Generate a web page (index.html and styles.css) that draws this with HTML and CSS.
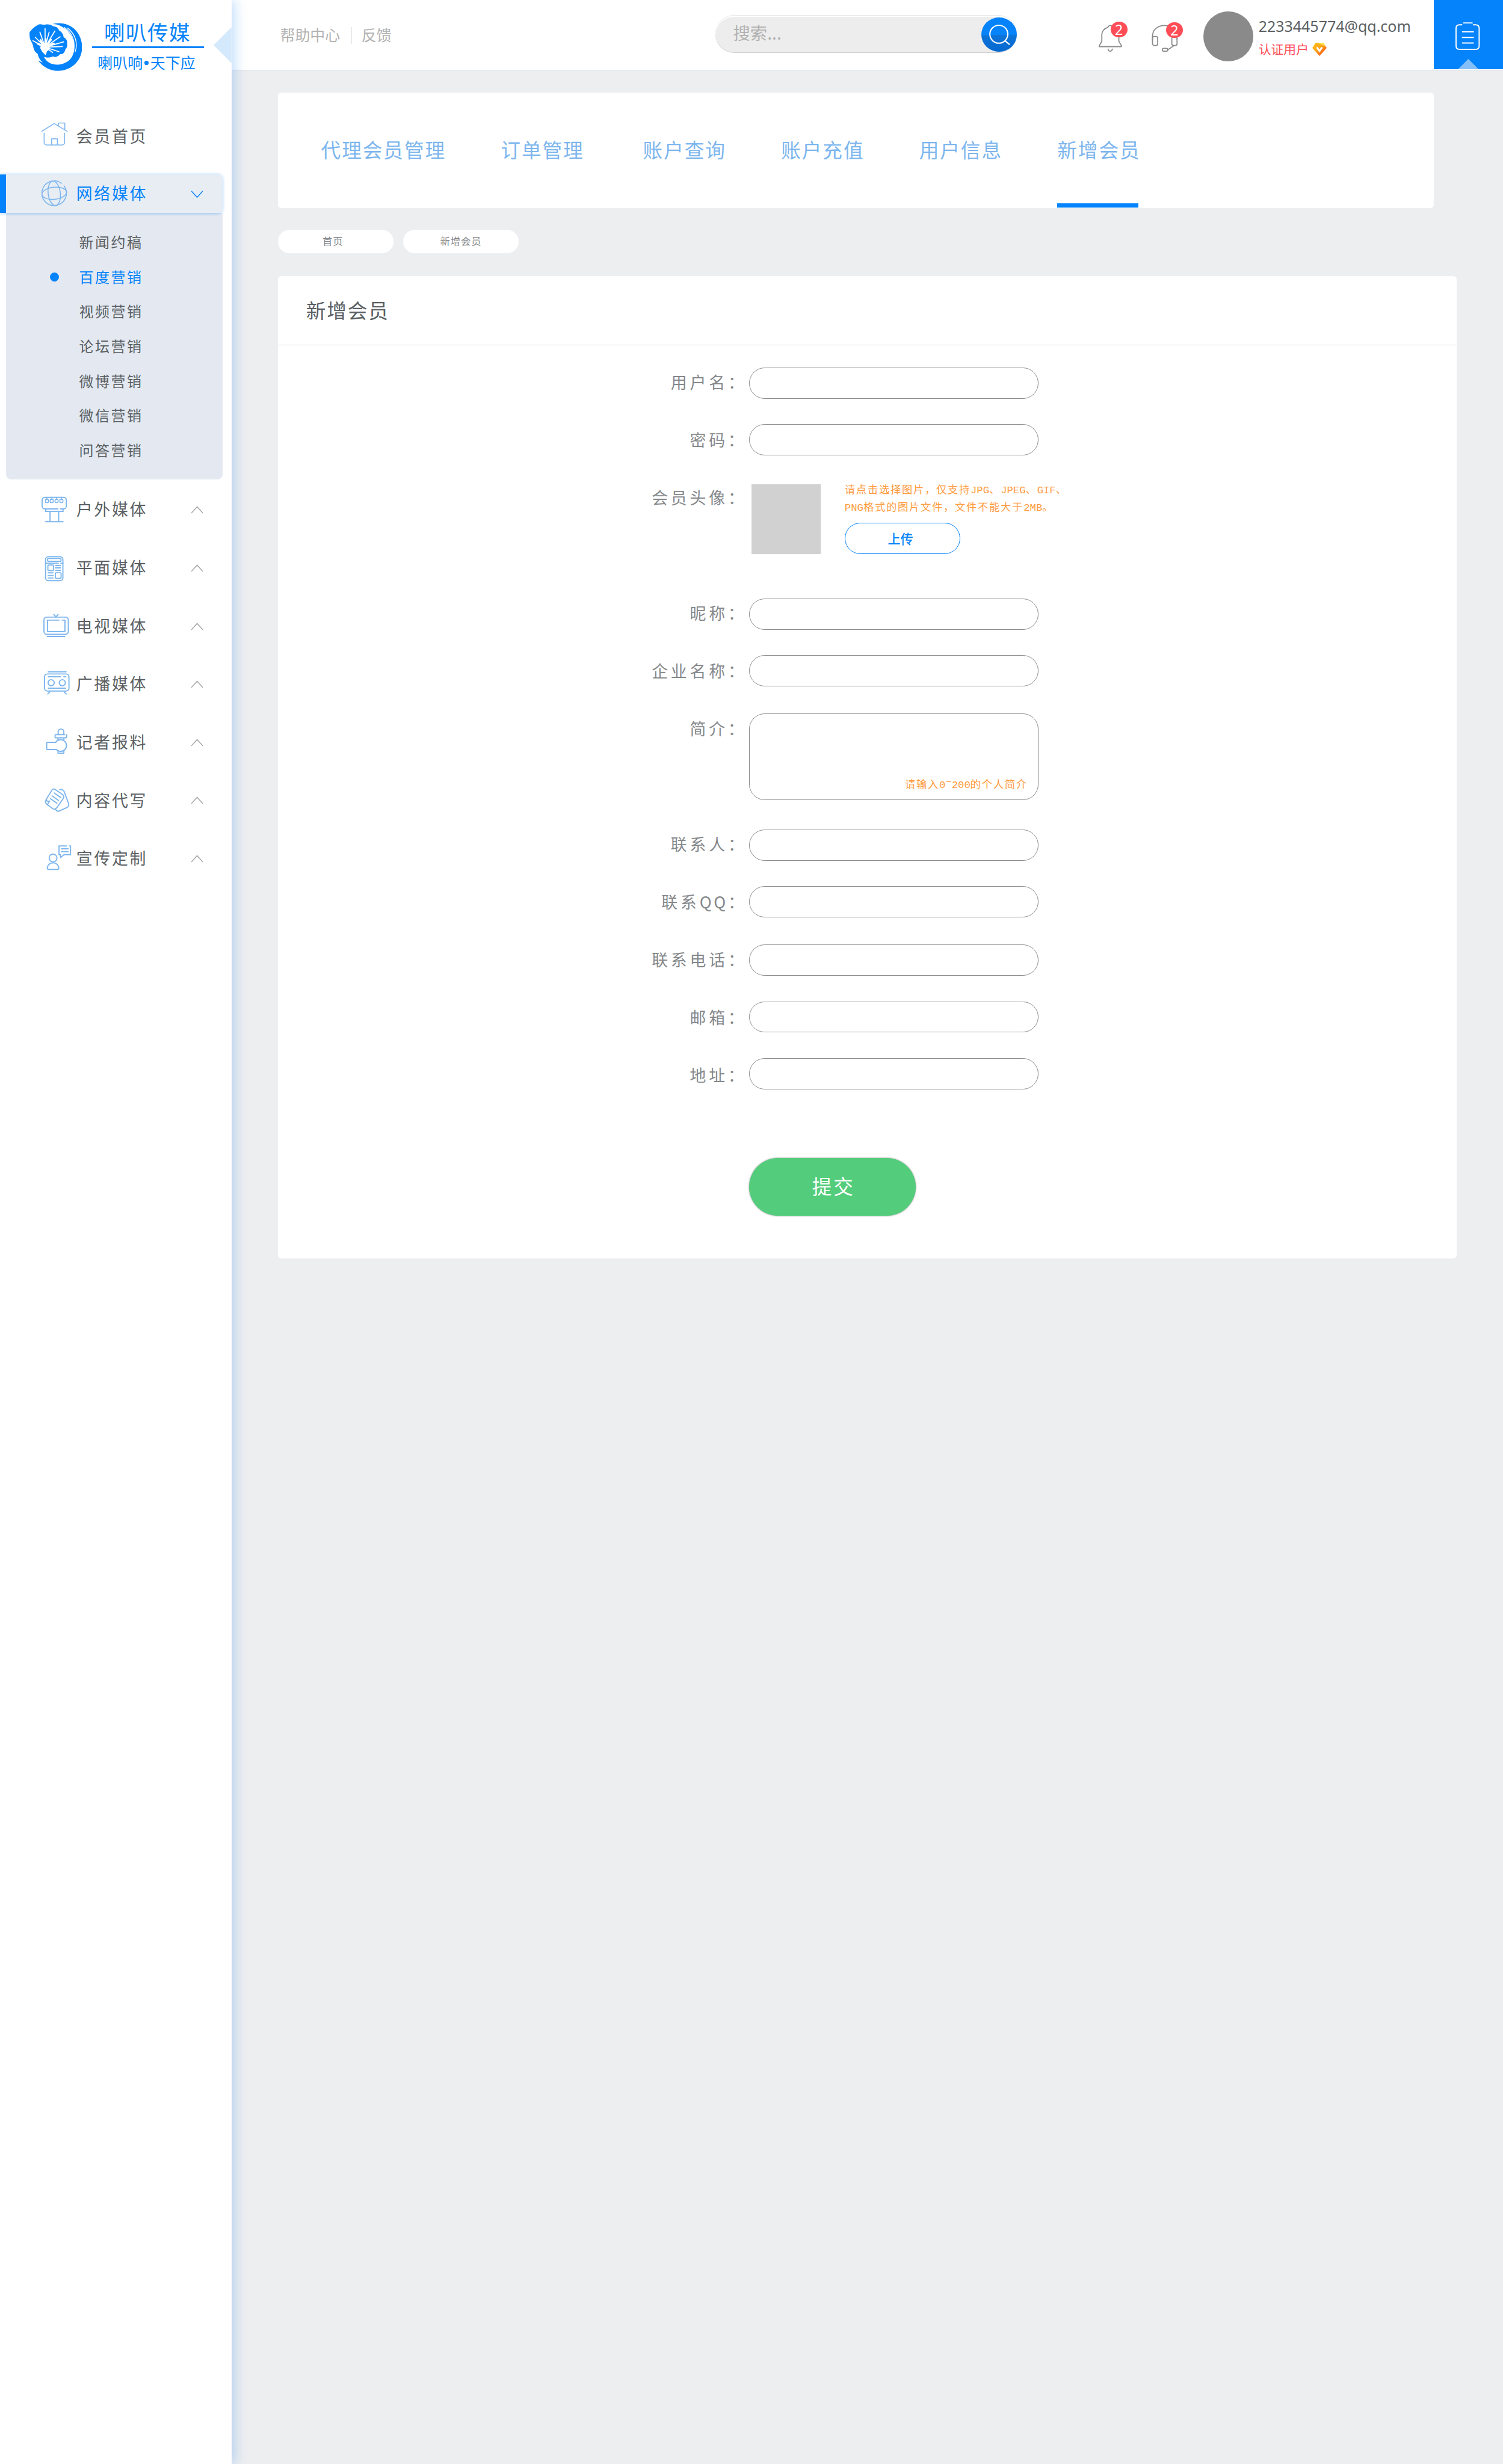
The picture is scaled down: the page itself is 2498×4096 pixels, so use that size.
FILE: index.html
```html
<!DOCTYPE html>
<html lang="zh-CN">
<head>
<meta charset="utf-8">
<title>新增会员</title>
<link rel="stylesheet" href="styles.css">
</head>
<body>
<svg class="defs" width="0" height="0">
  <symbol id="chev-up" viewBox="0 0 20 14"><path d="M0 12.5 10 1.5 20 12.5"/></symbol>
  <symbol id="chev-down" viewBox="0 0 20 14"><path d="M0 1.5 10 12.5 20 1.5"/></symbol>
</svg>
<div class="page">
  <aside class="sidebar">
    <div class="brand">
      <svg class="brand-mark" viewBox="0 0 91 83">
        <path fill="#0583fb" d="M40 2C68-5 91 15 91 42c0 24-19 41-42 41-14 0-26-7-34-18l8 4c-6-6-9-12-9-19l11 8c4 13 24 20 41 9C80 57 83 32 66 14 59 7 50 2 40 2z"/>
        <path fill="#0583fb" d="M0 17C4 10 10 6 15 3c5-2 8 1 12 0 6-1 10 0 14 3 6 0 9 4 10 7 6 3 8 8 8 12 5 2 7 7 6 11 1 5-1 8-3 10-1 6-5 9-9 8-3 5-9 6-12 4-5 2-10 3-14 1-7 0-11-4-15-7C6 47 7 38 4 34 1 29 0 26 0 17z"/>
        <g stroke="#fff" stroke-linecap="round" fill="none">
          <path stroke-width="1.800" d="M27 42 27 10M27 42 34 16M27 42 44 14M27 42 53 24M27 42 59 33M27 42 57 41M27 42 51 50M27 42 18 16M27 42 10 25M27 42 6 31M27 42 40 51"/>
          <path stroke-width="3.5" d="M27 42 28 28M27 42 37 29M27 42 42 36M27 42 19 30M27 42 14 36"/>
          <path stroke-width="1.4" d="M60 8C74 17 80 32 76 49M58 11C69 20 75 34 71 48M66 9C80 20 84 36 79 50"/>
        </g>
        <circle cx="27" cy="42" r="8" fill="#fff"/>
        <path fill="#fff" d="M18 42c2 6 5 10 10 14l3-9z"/>
      </svg>
      <div class="brand-text">
        <div class="brand-name">喇叭传媒</div>
        <div class="brand-slogan">喇叭响<i class="brand-dot"></i>天下应</div>
      </div>
      <span class="collapse"></span>
    </div>

    <a class="menu-item home">
      <svg class="menu-icon" viewBox="0 0 52 52"><path d="M.3 17 22 3.5 44.5 17M29.3 7V2.7h11V14M4.5 20v16.500a4 4 0 0 0 4 4H36a4 4 0 0 0 4-4V20M17.500 40.500V30h10v10.500" stroke-width="1.6"/></svg>
      <span>会员首页</span>
    </a>

    <a class="menu-item active">
      <svg class="menu-icon" viewBox="0 0 52 52"><g stroke-width="1.6"><path d="M34.500 8A21.300 21.300 0 1 0 39 12.500"/><ellipse cx="22" cy="25.300" rx="10.500" ry="21.300" transform="rotate(-7 22 25.300)"/><ellipse cx="22" cy="25.300" rx="21.300" ry="10.500" transform="rotate(-6 22 25.300)"/></g></svg>
      <span>网络媒体</span>
      <svg class="chevron"><use href="#chev-down"/></svg>
    </a>
    <div class="submenu">
      <a>新闻约稿</a>
      <a class="current">百度营销</a>
      <a>视频营销</a>
      <a>论坛营销</a>
      <a>微博营销</a>
      <a>微信营销</a>
      <a>问答营销</a>
    </div>

    <a class="menu-item">
      <svg class="menu-icon" viewBox="0 0 52 52"><path d="M28.500 25H6a5 5 0 0 1-5-5V10a5 5 0 0 1 5-5h32a5 5 0 0 1 5 5v10a5 5 0 0 1-5 5h-5M7 25.500v3.800h30.300v-3.800M14.700 29.500V47M29.700 29.500V47M7 47.200h30.300"/><g stroke-width="1.700"><path d="M9.300 5v3.500M17.700 5v3.500M26 5v3.500M34.300 5v3.500"/><rect x="6.700" y="8.500" width="5.300" height="5.600" rx="1.500"/><rect x="15" y="8.500" width="5.300" height="5.600" rx="1.500"/><rect x="23.400" y="8.500" width="5.300" height="5.600" rx="1.500"/><rect x="31.700" y="8.500" width="5.300" height="5.600" rx="1.500"/></g></svg>
      <span>户外媒体</span>
      <svg class="chevron"><use href="#chev-up"/></svg>
    </a>
    <a class="menu-item">
      <svg class="menu-icon" viewBox="0 0 52 52"><rect x="7" y="6.600" width="30" height="41.500" rx="5"/><rect x="10.500" y="9.700" width="23.300" height="5" rx="2"/><path d="M7 17.900h22M33.500 17.900H37M24.500 21.800h8.500M24.500 26h8.500M24.500 30.300h8.500M11.500 34.700h8.500M11.500 39.200h8.500M11.500 43.600h8.500"/><rect x="11" y="21" width="10" height="9.700" rx="1.500"/><rect x="23.900" y="34.500" width="10" height="9.700" rx="1.500"/></svg>
      <span>平面媒体</span>
      <svg class="chevron"><use href="#chev-up"/></svg>
    </a>
    <a class="menu-item">
      <svg class="menu-icon" viewBox="0 0 52 52"><rect x="4.200" y="11.300" width="42.200" height="29.800" rx="5"/><path d="M30.500 16.500H10.300v19.800h30.300V16.500h-5M21.300 6.800 25 10.800l3.700-4M10 44.800h30.300"/></svg>
      <span>电视媒体</span>
      <svg class="chevron"><use href="#chev-up"/></svg>
    </a>
    <a class="menu-item">
      <svg class="menu-icon" viewBox="0 0 52 52"><rect x="5.200" y="8.700" width="42.300" height="29.500" rx="5"/><path d="M11.800 4.900h30.700M11.800 13.500h21M38.500 13.500h3.600M11.800 33.300h30M14.300 39.800l-3.500 3.600M39.300 39.800l3.500 3.600"/><circle cx="16.700" cy="23.900" r="5.300"/><circle cx="36" cy="23.900" r="5.300"/></svg>
      <span>广播媒体</span>
      <svg class="chevron"><use href="#chev-up"/></svg>
    </a>
    <a class="menu-item">
      <svg class="menu-icon" viewBox="0 0 52 52"><path d="M29.500 12.500C28.500 10.500 28.500 9 28.700 8a5 5 0 0 1 10 0c.2 1 .2 2.500-.8 4.500M40 12.800H24.500a1 1 0 0 0-1 1v3.500a1 1 0 0 0 1 1H41a2.500 2.500 0 0 0 2.500-2.500v-3M28.500 18.500v4M38.700 18.500v4M24.500 26H10a1 1 0 0 0-1 1v10.500a1 1 0 0 0 1 1h15.500M28.500 41v3a.7.7 0 0 0 .7.700H38a.7.700 0 0 0 .7-.700v-3"/><path d="M24.500 26a10.200 10.200 0 1 1 1 12.500"/></svg>
      <span>记者报料</span>
      <svg class="chevron"><use href="#chev-up"/></svg>
    </a>
    <a class="menu-item">
      <svg class="menu-icon" viewBox="0 0 52 52"><path d="M23.500 7.500 36 16.200q4.500 3 1.500 7.300L26.300 39.500q-3 4-7 1.200L9.500 33.700q-4-3.500-1.700-8.200L17.500 9.500q2.500-4 6-2zM7.800 25.500q1.200 3.500 6.200 2.200L10 34M22 13.800l11 7.700M18.300 18.800l11 7.700M15.500 23.700l11 7.700M31.500 7.800q6-.8 8 4.200L47 32.500q1.200 4.500-3 6.500L31.500 44.700q-4.500 2-7.500-3"/></svg>
      <span>内容代写</span>
      <svg class="chevron"><use href="#chev-up"/></svg>
    </a>
    <a class="menu-item">
      <svg class="menu-icon" viewBox="0 0 52 52"><circle cx="20" cy="25.300" r="6.800"/><path d="M12 45h16q2 0 2-2.500C29.500 37.500 25.500 33.500 20 33.500S10.500 37.500 10 42.500Q10 45 12 45zM43.500 4.400H30.300v15.200H33v5l6-5h11.200V4.400H48.500M34.500 9.300H46M34.500 14.400H46"/></svg>
      <span>宣传定制</span>
      <svg class="chevron"><use href="#chev-up"/></svg>
    </a>
  </aside>

  <div class="main">
    <header class="topbar">
      <nav class="links"><a>帮助中心</a><i></i><a>反馈</a></nav>
      <div class="search">
        <span>搜索...</span>
        <button class="search-btn"><svg viewBox="0 0 62 60"><circle cx="30.300" cy="29" r="15.500"/><path d="M41 40.500l8 6.500"/></svg></button>
      </div>
      <div class="notice">
        <svg viewBox="0 0 44 48"><path d="M17 4.500Q18 1.500 21.500 1.500T26 4.500Q36 8 36 17V29l4.500 7.500q.5 1.500-1 1.500H3q-1.500 0-1-1.500L6.500 29V17Q7 8 17 4.500zM17 41.500q1 4.500 4 4.500t4-4.500"/></svg>
        <b class="badge">2</b>
      </div>
      <div class="notice headset">
        <svg viewBox="0 0 46 48"><path d="M1.500 26V20.500C1.500 9 10 1.500 22.500 1.500S44 9 44 20.500V26"/><rect x="1.500" y="20.500" width="9" height="15.500" rx="3"/><rect x="35" y="20.500" width="9" height="15.500" rx="3"/><path d="M38.500 36.500 28 43.500"/><rect x="18.500" y="41" width="9.500" height="5" rx="2.500"/></svg>
        <b class="badge">2</b>
      </div>
      <div class="avatar"></div>
      <div class="account">
        <div class="email">2233445774@qq.com</div>
        <div class="verified">认证用户
          <svg viewBox="0 0 25 23"><defs><linearGradient id="gem" x1="0" y1="0" x2="1" y2="1"><stop offset="0" stop-color="#ffc21a"/><stop offset=".45" stop-color="#ffa31a"/><stop offset="1" stop-color="#ee3a14"/></linearGradient></defs><path fill="url(#gem)" d="M6 0h13l6 9-12.500 14L0 9z"/><path fill="#ffe04a" d="M8 0h11l4 6-6-2z"/><path d="M8 8l4.500 6.500L17 8" fill="none" stroke="#fff" stroke-width="3"/></svg>
        </div>
      </div>
      <div class="tasks">
        <svg viewBox="0 0 42 48"><path d="M11 4.500H7q-6 0-6 6V41q0 6 6 6H35q6 0 6-6V10.500q0-6-6-6H31M14 1.200H29M12 16.500H31M12 26.300H31M12 36H31"/></svg>
        <span class="tasks-arrow"></span>
      </div>
    </header>

    <nav class="tabs">
      <a>代理会员管理</a>
      <a>订单管理</a>
      <a>账户查询</a>
      <a>账户充值</a>
      <a>用户信息</a>
      <a class="on">新增会员</a>
    </nav>

    <div class="crumbs"><a>首页</a><a>新增会员</a></div>

    <section class="panel">
      <h1>新增会员</h1>
      <form class="form">
        <div class="row"><label>用户名：</label><div class="field d24"></div></div>
        <div class="row"><label>密码：</label><div class="field d22"></div></div>
        <div class="row tall">
          <label>会员头像：</label>
          <div class="photo"></div>
          <div class="upload">
            <p>请点击选择图片，仅支持<em>JPG</em>、<em>JPEG</em>、<em>GIF</em>、</p>
            <p><em>PNG</em>格式的图片文件，文件不能大于<em>2MB</em>。</p>
            <button class="upload-btn">上传</button>
          </div>
        </div>
        <div class="row"><label>昵称：</label><div class="field d24"></div></div>
        <div class="row"><label>企业名称：</label><div class="field d22"></div></div>
        <div class="row tall"><label>简介：</label><div class="field area">请输入<em>0<i class="tilde">~</i>200</em>的个人简介</div></div>
        <div class="row"><label>联系人：</label><div class="field d24"></div></div>
        <div class="row"><label>联系<span class="latin">QQ</span>：</label><div class="field d22"></div></div>
        <div class="row"><label>联系电话：</label><div class="field d23"></div></div>
        <div class="row"><label>邮箱：</label><div class="field d21"></div></div>
        <div class="row"><label>地址：</label><div class="field d19"></div></div>
        <button class="submit">提交</button>
      </form>
    </section>
  </div>
</div>
</body>
</html>
```
FILE: styles.css
```css
* { box-sizing: border-box; }

body {
  margin: 0;
  background: #edeef0;
  font-family: "Noto Sans CJK SC", sans-serif;
  color: #5a5f63;
}

p, h1 { margin: 0; font-weight: 400; }
em, i { font-style: normal; }
button { border: 0; padding: 0; font: inherit; }
.defs { display: block; position: absolute; }

.page {
  zoom: 0.9606;
  display: flex;
  width: 100%;
  height: 4264px;
  overflow: hidden;
}

/* ---------- sidebar ---------- */
.sidebar {
  position: relative;
  z-index: 2;
  flex: none;
  width: 400.5px;
  background: #fff;
  box-shadow: 5px 0 20px rgba(5, 125, 240, .25);
}

.brand {
  position: relative;
  display: flex;
  height: 186px;
  padding: 40px 0 0 51px;
  color: #0583fb;
}
.brand-mark { width: 91px; height: 83px; }
.brand-text { width: 194px; margin-left: 17px; }
.brand-name {
  height: 43px;
  padding: 1px 0 0 21px;
  border-bottom: 4px solid #0583fb;
  font-size: 36px;
  line-height: 28px;
  letter-spacing: 1.5px;
  white-space: nowrap;
}
.brand-slogan {
  display: flex;
  align-items: center;
  padding-left: 10px;
  margin-top: 12px;
  font-size: 26px;
  line-height: 26px;
  white-space: nowrap;
}
.brand-dot { width: 7px; height: 7px; margin: 2px 3px 0 3px; border-radius: 50%; background: #0583fb; }
.collapse {
  position: absolute;
  right: 0;
  top: 47px;
  width: 31px;
  height: 62px;
  background: #d5e9fc;
  clip-path: polygon(100% 0, 100% 100%, 0 50%);
}

.menu-item {
  display: flex;
  align-items: center;
  height: 100.6px;
  padding: 0 49px 0 72px;
  font-size: 28px;
  letter-spacing: 2.8px;
  line-height: 40px;
}
.menu-item span { margin-top: -1px; }
.menu-icon {
  width: 52px;
  height: 52px;
  margin-right: 8px;
  fill: none;
  stroke: #7db6ee;
  stroke-width: 2;
  stroke-linecap: round;
  stroke-linejoin: round;
}
.chevron { width: 20px; height: 14px; margin: 2px 0 0 auto; fill: none; stroke: #a5a7a9; stroke-width: 1.5; }
.menu-item.home { height: 100px; margin-bottom: 16px; }
.menu-item.active {
  position: relative;
  width: 385px;
  height: 66.600px;
  padding-right: 34px;
  border-radius: 0 9px 9px 0;
  background: linear-gradient(90deg, #0583fb 10px, #e8edf4 10px);
  box-shadow: 0 1px 6px rgba(5, 131, 251, .4);
  color: #0583fb;
}
.menu-item.active span { margin-top: -2px; }
.menu-item.active .chevron { stroke: #0583fb; margin-top: 1px; }

.submenu {
  width: 375px;
  height: 461px;
  margin: 0 0 2px 10px;
  padding-top: 19.500px;
  border-radius: 0 0 9px 9px;
  background: #e4e9f1;
}
.submenu a {
  display: flex;
  align-items: center;
  height: 60px;
  padding-left: 127px;
  font-size: 25px;
  letter-spacing: 2.6px;
}
.submenu .current { color: #0583fb; padding-left: 76px; }
.submenu .current::before {
  content: "";
  width: 16px;
  height: 16px;
  margin: 3px 35px 0 0;
  border-radius: 50%;
  background: #0583fb;
}

/* ---------- top bar ---------- */
.main { flex: 1; min-width: 0; }

.topbar {
  display: flex;
  height: 122px;
  border-bottom: 2px solid #d9dee2;
  background: #fff;
}
.links {
  display: flex;
  align-items: center;
  width: 837px;
  padding: 0 0 3px 84px;
  font-size: 26px;
  color: #b2b2b2;
}
.links i { width: 2px; height: 29px; margin: 5px 17px 0 18px; background: #b2b2b2; }

.search {
  display: flex;
  align-items: center;
  justify-content: space-between;
  width: 522px;
  height: 66px;
  margin-top: 26px;
  padding-left: 31px;
  border-radius: 33px;
  background: #ededed;
  box-shadow: inset 0 1px 0 #e6e6e6, inset 0 3px 0 #fff, inset 0 -1px 0 #cfcfcf;
  font-size: 29.5px;
  line-height: 40px;
  color: #b2b2b2;
}
.search span { margin-top: -6px; }
.search-btn {
  width: 62px;
  height: 60px;
  margin-top: 2px;
  border-radius: 50%;
  background: linear-gradient(#0583fb 51%, #0e74d8 51%, #0468d0);
}
.search-btn svg { display: block; width: 62px; height: 60px; fill: none; stroke: #fff; stroke-width: 2.2; }

.notice { position: relative; width: 44px; height: 48px; margin: 43px 0 0 140px; }
.notice svg { display: block; height: 48px; fill: none; stroke: #8c8c8c; stroke-width: 1.9; }
.notice.headset { width: 46px; margin-left: 49px; }
.badge {
  position: absolute;
  left: 22px;
  top: -6px;
  width: 29px;
  height: 28px;
  border-radius: 50%;
  background: #ff4d57;
  color: #fff;
  font: 400 24px/28px "Noto Sans", sans-serif;
  text-align: center;
}
.headset .badge { left: 25px; top: -5px; }

.avatar { width: 86px; height: 86px; margin: 20px 0 0 44px; border-radius: 50%; background: #8a8a8a; }
.account { width: 312px; padding-left: 9px; }
.email { margin-top: 27px; font: 26px/36px "Noto Sans", sans-serif; }
.verified {
  display: flex;
  align-items: center;
  gap: 6px;
  margin-top: 6px;
  font-size: 21.700px;
  line-height: 32px;
  color: #ff4d57;
}
.verified svg { width: 25px; height: 23px; margin-top: 1px; }

.tasks { position: relative; flex: 1; height: 120px; background: #0583fb; }
.tasks svg { display: block; width: 42px; height: 48px; margin: 39px 0 0 38px; fill: none; stroke: #fff; stroke-width: 2; stroke-linecap: round; }
.tasks-arrow {
  position: absolute;
  left: 42px;
  bottom: 0;
  width: 36px;
  height: 18px;
  background: #84bff8;
  clip-path: polygon(50% 0, 100% 100%, 0 100%);
}

/* ---------- tabs and breadcrumbs ---------- */
.tabs {
  display: flex;
  gap: 95px;
  width: 2000px;
  height: 200px;
  margin: 38px 0 0 80px;
  padding-left: 75px;
  border-radius: 6px;
  background: #fff;
  font-size: 34px;
  line-height: 196px;
  letter-spacing: 2px;
  color: #7db6ee;
}
.tabs a { height: 199px; }
.tabs a:nth-child(2) { margin-right: 7px; }
.tabs .on { width: 140px; border-bottom: 8px solid #0583fb; white-space: nowrap; }

.crumbs { display: flex; gap: 17px; margin: 38px 0 0 80px; }
.crumbs a {
  width: 200px;
  height: 40px;
  padding-right: 9px;
  border-radius: 20px;
  background: #fff;
  font-size: 17px;
  line-height: 39px;
  letter-spacing: 1px;
  text-align: center;
  color: #85888b;
}
.crumbs a + a { padding-right: 0; }

/* ---------- form panel ---------- */
.panel {
  width: 2040px;
  height: 1700px;
  margin: 40px 0 0 80px;
  border-radius: 6px;
  background: #fff;
}
.panel h1 {
  height: 120px;
  padding-left: 49px;
  border-bottom: 1px solid #dcdddf;
  font-size: 34px;
  line-height: 116px;
  letter-spacing: 2px;
}
.form { padding-top: 14px; }
.row { display: flex; height: 100px; }
.row.tall { height: 200px; }
.row label {
  width: 812px;
  margin-right: 4px;
  font-size: 28px;
  line-height: 98px;
  letter-spacing: 5px;
  text-align: right;
  color: #85888b;
}
.row .latin { letter-spacing: 3.800px; }
.field { width: 500.500px; height: 54px; border: 1px solid #8a8d90; border-radius: 27px; }
.d24 { margin-top: 24px; }
.d23 { margin-top: 23px; }
.d22 { margin-top: 22px; }
.d21 { margin-top: 21px; }
.d19 { margin-top: 19px; }

.area, .upload p { font-size: 18px; letter-spacing: 1.800px; color: #ff9a3d; }
.area {
  height: 150px;
  margin-top: 23px;
  padding: 107px 18px 0 0;
  line-height: 28px;
  text-align: right;
}
.area em, .upload em { font-family: "Liberation Mono", monospace; letter-spacing: 0; }
.tilde { vertical-align: 5px; line-height: 0; }

.photo { width: 120px; height: 121px; margin: 26px 0 0 4px; background: #d1d1d1; }
.upload { margin: 20px 0 0 41px; }
.upload p { height: 30px; line-height: 30px; white-space: nowrap; }
.upload-btn {
  display: block;
  width: 200px;
  height: 54px;
  margin-top: 13px;
  padding: 0 7px 2px 0;
  border: 1px solid #0583fb;
  border-radius: 27px;
  background: #fff;
  font-size: 22px;
  font-weight: 500;
  color: #0583fb;
}
.submit {
  display: block;
  width: 288px;
  height: 100px;
  margin: 92px 0 0 816px;
  padding: 0 0 5px 3px;
  border-radius: 50px;
  background: #53cd7c;
  box-shadow: 0 0 3px rgba(60, 60, 60, .6);
  font-size: 34px;
  letter-spacing: 3px;
  color: #fff;
}
```
